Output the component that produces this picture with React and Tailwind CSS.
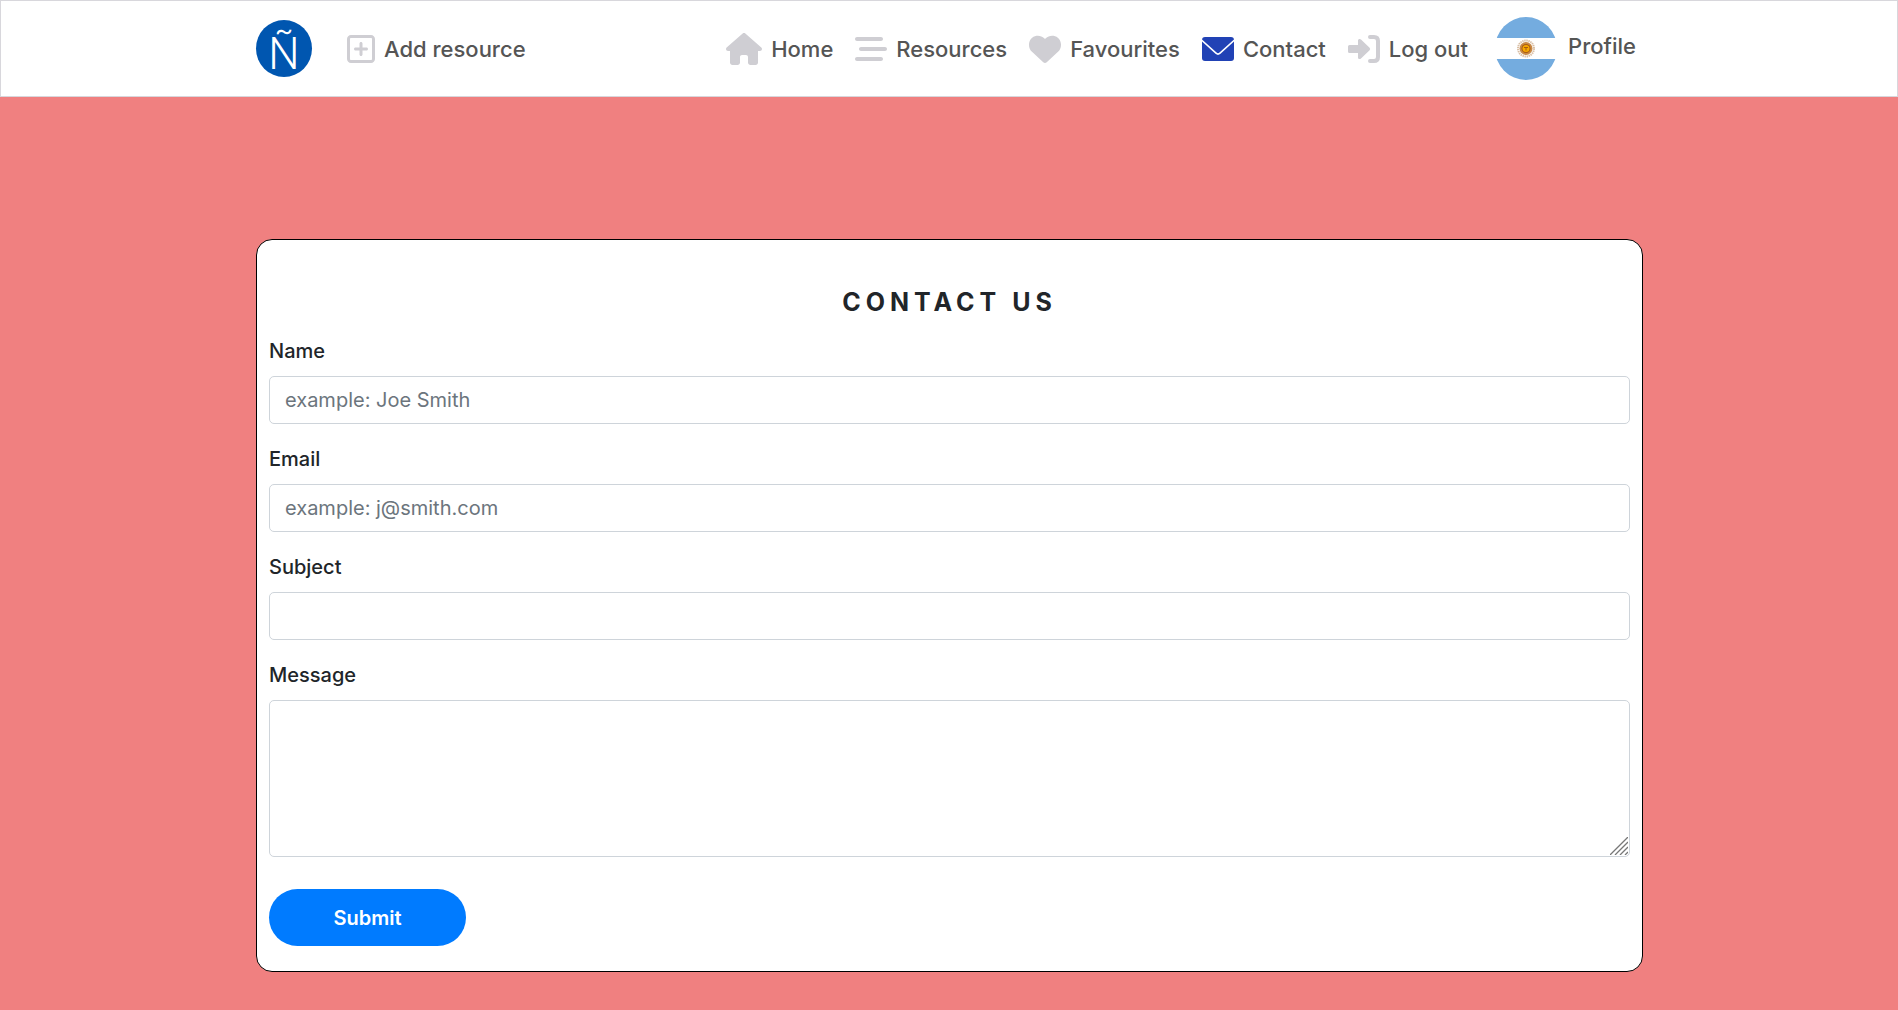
import React from "react";
import {
  FaRegSquarePlus,
  FaHouse,
  FaBarsStaggered,
  FaHeart,
} from "react-icons/fa6";

function EnvelopeIcon({ className }) {
  return (
    <svg viewBox="0 0 32 32" className={className} aria-hidden="true">
      <rect x="0" y="4" width="32" height="24" rx="3" fill="currentColor" />
      <path d="M-0.500 7 14 20.200Q16 22 18 20.200L32.500 7" fill="none" stroke="#fff" strokeWidth="1.6" />
    </svg>
  );
}

function LogOutIcon({ className }) {
  return (
    <svg viewBox="0 0 32 32" className={className} aria-hidden="true">
      <path
        d="M1.5 12H10V7.6C10 6 11.8 5.400 13 6.500L21.600 14.700Q22.800 16 21.600 17.300L13 25.500C11.800 26.600 10 26 10 24.400V20H1.500Q0 20 0 18.500V13.500Q0 12 1.500 12Z"
        fill="currentColor"
      />
      <path d="M22 4H26Q30 4 30 8V24Q30 28 26 28H22" fill="none" stroke="currentColor" strokeWidth="4" strokeLinecap="round" />
    </svg>
  );
}

function Logo() {
  return (
    <svg viewBox="0 0 56 57" className="h-[57px] w-14 overflow-visible" role="img" aria-label="Ñ">
      <ellipse cx="28" cy="28.500" rx="28" ry="28.500" fill="#0056b0" />
      <text x="28" y="49" textAnchor="middle" fill="#fff" className="font-['Roboto',sans-serif] text-[44px] font-light">
        Ñ
      </text>
    </svg>
  );
}

function Flag() {
  return (
    <svg viewBox="0 0 60 63" className="h-[63px] w-[60px]" role="img" aria-label="Argentina">
      <defs>
        <clipPath id="flag-round">
          <ellipse cx="30" cy="31.500" rx="31" ry="31.500" />
        </clipPath>
      </defs>
      <g clipPath="url(#flag-round)">
        <rect width="60" height="63" fill="#fff" />
        <rect width="60" height="21" fill="#74acdf" />
        <rect y="42" width="60" height="21" fill="#74acdf" />
        <circle cx="30" cy="31.500" r="8" fill="none" stroke="#c9a27c" strokeWidth="2" strokeDasharray="1.400 0.700" opacity="0.700" />
        <circle cx="30" cy="31.500" r="6.500" fill="#c98a48" />
        <circle cx="30" cy="31.500" r="4.500" fill="#a85a10" />
        <circle cx="30" cy="31.500" r="3.500" fill="#f6a800" />
        <path d="M28 30.500h4M30 31v2.500" stroke="#a85a10" strokeWidth="1" />
      </g>
    </svg>
  );
}

function ResizeGrip() {
  return (
    <svg viewBox="0 0 18 18" className="pointer-events-none absolute right-0.5 bottom-0.5 size-[18px] bg-white" aria-hidden="true">
      <path d="M0 18 18 0M5 18 18 5M10 18 18 10M15 18 18 15" fill="none" stroke="#777" strokeWidth="1.3" />
    </svg>
  );
}

const links = [
  { label: "Home", Icon: FaHouse, icon: "h-8 w-9 text-[#cfced3]" },
  { label: "Resources", Icon: FaBarsStaggered, icon: "size-8 text-[#cfced3]" },
  { label: "Favourites", Icon: FaHeart, icon: "size-8 text-[#cfced3]" },
  { label: "Contact", Icon: EnvelopeIcon, icon: "size-8 text-[#2142b5]" },
  { label: "Log out", Icon: LogOutIcon, icon: "size-8 text-[#cfced3]" },
];

function NavLink({ label, Icon, icon }) {
  return (
    <a href="#" className="flex items-center gap-[9px] whitespace-nowrap">
      <Icon className={icon} />
      <span className="pt-0.5">{label}</span>
    </a>
  );
}

const field =
  "block w-full rounded-[5px] border border-[#ced4da] bg-white px-[15px] text-[20px] text-[#495057] placeholder:text-[#6c757d]";

function Field({ id, label, children }) {
  return (
    <div className="mb-5">
      <label htmlFor={id} className="mb-2.5 block text-[20px] leading-[30px] font-medium">
        {label}
      </label>
      {children}
    </div>
  );
}

export default function App() {
  return (
    <div className="min-h-screen bg-[#f08080] font-['Inter','Noto_Sans',sans-serif] text-[#212529]">
      <nav className="flex h-[97px] items-center border border-[#d8d7dc] bg-white px-[255px] text-[22px] font-medium text-[#555]">
        <a href="#" className="mr-[35px]">
          <Logo />
        </a>
        <NavLink label="Add resource" Icon={FaRegSquarePlus} icon="h-8 w-7 text-[#cfced3]" />
        <div className="ml-auto flex items-center gap-[22px]">
          {links.map((l) => (
            <NavLink key={l.label} {...l} />
          ))}
          <a href="#" className="mr-[6px] ml-1.5 flex items-center gap-3">
            <Flag />
            <span className="pb-1">Profile</span>
          </a>
        </div>
      </nav>
      <main className="pt-[142px] pr-[255px] pb-[38px] pl-64">
        <form className="rounded-2xl border border-black bg-white px-3 pt-11 pb-[25px]" onSubmit={(e) => e.preventDefault()}>
          <h1 className="mb-4 text-center text-[25px] leading-9 font-bold tracking-[5px] uppercase">Contact us</h1>
          <Field id="name" label="Name">
            <input id="name" type="text" placeholder="example: Joe Smith" className={`${field} h-12`} />
          </Field>
          <Field id="email" label="Email">
            <input id="email" type="email" placeholder="example: j@smith.com" className={`${field} h-12`} />
          </Field>
          <Field id="subject" label="Subject">
            <input id="subject" type="text" className={`${field} h-12`} />
          </Field>
          <Field id="message" label="Message">
            <div className="relative">
              <textarea id="message" className={`${field} h-[157px] resize-y py-2`} />
              <ResizeGrip />
            </div>
          </Field>
          <button type="submit" className="mt-8 block h-[57px] w-[197px] rounded-full bg-[#007bff] text-[20px] font-semibold text-white">
            Submit
          </button>
        </form>
      </main>
    </div>
  );
}
